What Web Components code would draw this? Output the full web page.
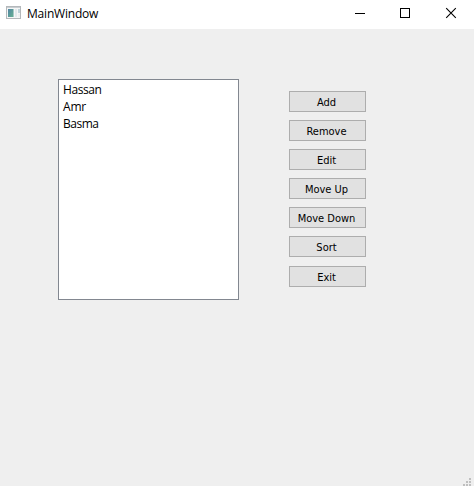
<!DOCTYPE html>
<html lang="en">
<head>
<meta charset="utf-8">
<title>MainWindow</title>
<style>
html,body{margin:0;height:100%;overflow:hidden;background:#efefef}
</style>
</head>
<body>
<main-window>
  <title-bar slot="title">MainWindow</title-bar>
  <list-widget>
    <list-item style="--ls:-.4px">Hassan</list-item>
    <list-item style="--ls:-.2px">Amr</list-item>
    <list-item style="--ls:-.5px">Basma</list-item>
  </list-widget>
  <button-column>
    <push-button>Add</push-button>
    <push-button>Remove</push-button>
    <push-button>Edit</push-button>
    <push-button>Move Up</push-button>
    <push-button>Move Down</push-button>
    <push-button>Sort</push-button>
    <push-button style="margin-top:1px">Exit</push-button>
  </button-column>
</main-window>
<script>
function define(name, html) {
  customElements.define(name, class extends HTMLElement {
    constructor() {
      super();
      this.attachShadow({mode: 'open'}).innerHTML = html;
    }
  });
}
define('main-window', `<style>
:host{display:grid;grid-template-rows:29px 1fr 11px;width:474px;height:486px;background:#efefef;color:#000;font:12px/17px "Open Sans","Noto Sans",sans-serif}
main{display:flex;align-items:flex-start;gap:50px;padding:50px 0 0 58px}
footer{display:flex;justify-content:flex-end;align-items:flex-start}
</style><slot name="title"></slot><main><slot></slot></main><footer><size-grip></size-grip></footer>`);
define('title-bar', `<style>
:host{display:flex;align-items:flex-start;background:#fff;height:29px}
.icon{margin:6px 6px 0 6px;flex:none}
span{margin-top:5px;flex:1;letter-spacing:-.2px}
nav{display:flex}
nav svg{display:block}
</style>
<svg class="icon" width="15" height="14" viewBox="0 0 15 14">
<defs><linearGradient id="g" x2="1" y2="1"><stop stop-color="#5184a4"/><stop offset="1" stop-color="#65b092"/></linearGradient></defs>
<rect x=".5" y=".5" width="14" height="12" fill="#f5f6f6" stroke="#b4b8bb"/>
<path d="M1 1.5h13" stroke="#c8cdd1"/>
<rect x="2" y="3" width="5" height="8" fill="url(#g)"/>
<rect x="7" y="3" width="1" height="8" fill="#a5c8c4"/>
<rect x="9" y="3" width="2" height="8" fill="#e2e9ec"/>
<rect x="12" y="3" width="2" height="4" fill="#bfd3da"/><rect x="12" y="8" width="2" height="3" fill="#eceff0"/>
</svg><span><slot></slot></span>
<nav>
<svg width="46" height="29"><path d="M18 13.5h10" stroke="#000"/></svg>
<svg width="45" height="29"><rect x="17.5" y="8.5" width="9" height="9" fill="none" stroke="#000"/></svg>
<svg width="46" height="29"><path d="M18.2 8.2l9.6 9.6m0-9.6l-9.6 9.6" stroke="#000" stroke-width="1.1"/></svg>
</nav>`);
define('list-widget', `<style>
:host{display:block;box-sizing:border-box;width:181px;height:221px;background:#fff;border:1px solid #828790;padding:1px 4px}
</style><slot></slot>`);
define('list-item', `<style>:host{display:block;height:17px;letter-spacing:var(--ls,0)}</style><slot></slot>`);
define('button-column', `<style>:host{display:flex;flex-direction:column;gap:8px;padding-top:12px}</style><slot></slot>`);
define('push-button', `<style>
:host{display:flex;box-sizing:border-box;width:77px;height:21px;background:#e1e1e1;border:1px solid #adadad;align-items:flex-start;justify-content:center;font:11px/19px "DejaVu Sans Condensed","DejaVu Sans",sans-serif;font-stretch:condensed;padding:1px 2px 0 0}
</style><span><slot></slot></span>`);
define('size-grip', `<style>:host{display:block}svg{display:block}</style>
<svg width="12" height="11" fill="#bfbfbf"><path d="M7 3h2v2H7zM7 6h2v2H7zM7 9h2v2H7zM4 6h2v2H4zM4 9h2v2H4zM1 9h2v2H1z"/></svg>`);
</script>
</body>
</html>
